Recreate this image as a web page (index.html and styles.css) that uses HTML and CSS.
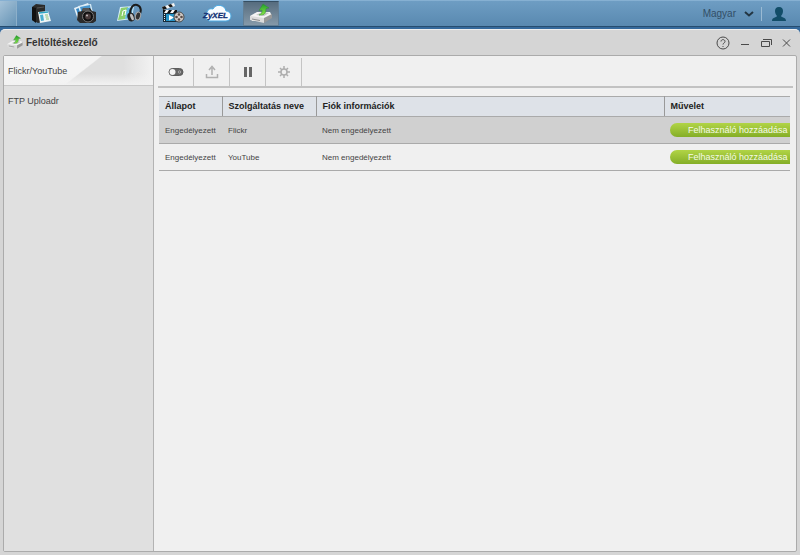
FILE: index.html
```html
<!DOCTYPE html>
<html lang="hu">
<head>
    <meta charset="UTF-8">
    <meta name="viewport" content="width=device-width, initial-scale=1.0">
    <title>Feltöltéskezelő</title>
    <link rel="stylesheet" href="styles.css">
</head>
<body>
    <svg class="defs" aria-hidden="true">
        <linearGradient id="arrow" x1="0" y1="0" x2="0" y2="1">
            <stop offset="0" stop-color="#1f9f2a"/>
            <stop offset="1" stop-color="#8be548"/>
        </linearGradient>
        <symbol id="uploader" viewBox="0 0 26 22">
            <path d="M2 13 9 9h13l2 4-8 5H4z" fill="#f4f4f4"/>
            <path d="M2 13 16 15v5L2 17z" fill="#dcdcdc"/>
            <path d="M16 15 24 11v4l-8 5z" fill="#989898"/>
            <path d="M4 16l8 1.500" stroke="#8d8d8d"/>
            <path d="M8 12l6-3 7 1-5 3z" fill="#c4c4c4"/>
            <path d="M11 12c3-1 3-3 3-5l-3 .500L15 1l6 4-3 .500c0 4-1 6-4 6.500z" fill="url(#arrow)" stroke="#2b9131" stroke-width=".5"/>
        </symbol>
    </svg>

    <header class="taskbar">
        <button class="show-desktop" aria-label="Asztal"></button>
        <nav class="apps">
            <button class="app" aria-label="Fájlkezelő">
                <svg width="22" height="20" viewBox="0 0 22 20">
                    <path d="M2 3l4-3 9 1v16l-7 2-6-3z" fill="#2a2a2a"/>
                    <path d="M2 3l4 1v15l-4-3z" fill="#111"/>
                    <path d="M7 4l7-1" stroke="#555"/>
                    <path d="M8 8l10-1 3 10-11 2z" fill="#eef5f5"/>
                    <path d="M9 9l9-1" stroke="#2ba3c4" stroke-width="1.500"/>
                    <path d="M10 11l3-.500 1 6-3 .500z" fill="#49afd1"/>
                    <path d="M15 11h3M15.500 13h3M16 15h3" stroke="#8cc178"/>
                </svg>
            </button>
            <button class="app" aria-label="Fényképek">
                <svg width="24" height="21" viewBox="0 0 24 21">
                    <path d="M1 5l14-5 5 10-15 7z" fill="#e8f2f8"/>
                    <path d="M3 6l11-4 4 8-12 5z" fill="#3989c4"/>
                    <path d="M5 3l13-2 2 9-12 3z" fill="#d9ecf6"/>
                    <path d="M7 4l10-2 1 7-9 2z" fill="#4996cd"/>
                    <path d="M5 9l4-1 1-3h7l2 3 4 1v9l-3 2H7l-3-3z" fill="#2b2b2b"/>
                    <path d="M10 5h6l1 3H9z" fill="#555"/>
                    <circle cx="15" cy="13.500" r="5.500" fill="#111" stroke="#777"/>
                    <circle cx="15" cy="13.500" r="3" fill="#4a3c3c"/>
                    <circle cx="14" cy="12.500" r="1" fill="#c4bdbd"/>
                </svg>
            </button>
            <button class="app" aria-label="Zene">
                <svg width="26" height="21" viewBox="0 0 26 21">
                    <path d="M4 4l14-1-2 13-15 2z" fill="#d7eefa"/>
                    <path d="M5 5l7-1-3 12-7 1z" fill="#8ccf6c"/>
                    <path d="M11 5l6-1-2 11-6 1z" fill="#62b8e2"/>
                    <path d="M6 13l1-5 3-1-1 5" fill="none" stroke="#fff"/>
                    <path d="M14 11c0-6 3-10 7-9 4 1 5 6 2 11" fill="none" stroke="#1b1b1b" stroke-width="2"/>
                    <ellipse cx="15" cy="14" rx="3.500" ry="4.500" transform="rotate(-20 15 14)" fill="#222"/>
                    <ellipse cx="16" cy="14" rx="1.500" ry="3.500" transform="rotate(-20 16 14)" fill="#c1c1c1"/>
                    <ellipse cx="22" cy="13" rx="2.500" ry="4" transform="rotate(15 22 13)" fill="#333" stroke="#aaa"/>
                </svg>
            </button>
            <button class="app" aria-label="Videók">
                <svg width="24" height="21" viewBox="0 0 24 21">
                    <path d="M1 4l12-4 1 3-12 4z" fill="#f5f5f5"/>
                    <path d="M1 4l3-1 2 2.500-4 1.500zM7 2l3-1 2 2.500-3 1z" fill="#161616"/>
                    <path d="M2 7h14v3H2z" fill="#f8f8f8"/>
                    <path d="M2 7h3l-2 3H2zM8 7h3l-2 3H6zM14 7h2v3h-4z" fill="#111"/>
                    <path d="M2 10h15v9H2z" fill="#162c3a"/>
                    <path d="M5 11h9v7H5z" fill="#2693c6"/>
                    <path d="M8 12l5 2.500-5 3z" fill="#fff"/>
                    <path d="M3.500 11v7" stroke="#eee" stroke-dasharray="1 1"/>
                    <circle cx="18" cy="14" r="5" fill="#d3cdc9" stroke="#4a4a4a"/>
                    <g fill="#594b46"><circle cx="18" cy="11.500" r="1.300"/><circle cx="18" cy="16.500" r="1.300"/><circle cx="15.500" cy="14" r="1.300"/><circle cx="20.500" cy="14" r="1.300"/></g>
                </svg>
            </button>
            <button class="app" aria-label="ZyXEL">
                <svg width="30" height="18" viewBox="0 0 30 18">
                    <path d="M6 15a4.500 4.500 0 0 1-1-8 5 5 0 0 1 6-3 7 7 0 0 1 13 2 5 5 0 0 1 0 10H7z" fill="#f8fcff" stroke="#4aa9e2"/>
                    <text x="1" y="13" class="brand">ZyXEL</text>
                </svg>
            </button>
            <button class="app active" aria-label="Feltöltéskezelő">
                <svg width="26" height="22"><use href="#uploader"/></svg>
            </button>
        </nav>
        <div class="session">
            <button class="language">Magyar
                <svg width="10" height="6" viewBox="0 0 10 6"><path d="M1 1l4 3.500 4-3.500" fill="none" stroke="#233643" stroke-width="2"/></svg>
            </button>
            <button class="user" aria-label="Felhasználó">
                <svg width="16" height="16" viewBox="0 0 16 16"><path d="M8 1c3 0 4 2 4 4s-1 4-2 5c1 2 5 1 5 5H1c0-4 4-3 5-5-1-1-2-3-2-5s1-4 4-4z" fill="#124d68"/></svg>
            </button>
        </div>
    </header>

    <main class="window">
        <div class="titlebar">
            <svg width="18" height="17"><use href="#uploader"/></svg>
            <h1>Feltöltéskezelő</h1>
            <div class="controls">
                <button aria-label="Súgó"><svg width="14" height="14" viewBox="0 0 14 14"><circle cx="7" cy="7" r="6"/><path d="M5 5.500C5 3 9 3 9 5.500 9 7 7 7 7 8.500M7 10v1"/></svg></button>
                <button aria-label="Kis méret"><svg width="10" height="14" viewBox="0 0 10 14"><path d="M1 8.500h8"/></svg></button>
                <button aria-label="Előző méret"><svg width="12" height="14" viewBox="0 0 12 14"><path d="M1.500 5.500h8v5h-8zM3 3.500h8.500V9"/></svg></button>
                <button aria-label="Bezárás"><svg width="9" height="14" viewBox="0 0 9 14"><path d="M1 3.500l7 7M8 3.500l-7 7"/></svg></button>
            </div>
        </div>
        <div class="content">
            <nav class="sidebar">
                <a class="selected" href="#flickr">Flickr/YouTube</a>
                <a href="#ftp">FTP Uploadr</a>
            </nav>
            <section class="panel">
                <div class="toolbar">
                    <button aria-label="Be/Ki"><svg width="16" height="16" viewBox="0 0 16 16"><rect x="1" y="4.500" width="14" height="7" rx="3.500" fill="#666" stroke="#5c5c5c"/><circle cx="4.500" cy="8" r="3" fill="#f4f4f4"/><circle cx="11.500" cy="8" r="1.200" fill="none" stroke="#aaa"/></svg></button>
                    <button aria-label="Feltöltés"><svg width="14" height="16" viewBox="0 0 14 16"><path d="M7 11V4M4 6l3-3.500L10 6M1.500 10v3.500h11V10" fill="none" stroke="#b0b0b0" stroke-width="1.500"/></svg></button>
                    <button aria-label="Szünet"><svg width="10" height="16" viewBox="0 0 10 16"><path d="M1 3h3v10H1zM6 3h3v10H6z" fill="#666"/></svg></button>
                    <button aria-label="Beállítások"><svg width="14" height="16" viewBox="0 0 14 16"><g fill="none" stroke="#adadad"><circle cx="7" cy="8" r="3" stroke-width="1.500"/><path d="M7 2v3M7 11v3M1 8h3M10 8h3M3 4l2 2M9 10l2 2M3 12l2-2M9 6l2-2" stroke-width="1.500"/></g></svg></button>
                </div>
                <div class="table-wrap">
                    <table>
                        <colgroup><col class="col-state"><col class="col-name"><col><col class="col-action"></colgroup>
                        <thead>
                            <tr><th>Állapot</th><th>Szolgáltatás neve</th><th>Fiók információk</th><th>Művelet</th></tr>
                        </thead>
                        <tbody>
                            <tr class="current"><td>Engedélyezett</td><td>Flickr</td><td>Nem engedélyezett</td><td><button class="add-user">Felhasználó hozzáadása</button></td></tr>
                            <tr><td>Engedélyezett</td><td>YouTube</td><td>Nem engedélyezett</td><td><button class="add-user">Felhasználó hozzáadása</button></td></tr>
                        </tbody>
                    </table>
                </div>
            </section>
        </div>
    </main>
</body>
</html>
```
FILE: styles.css
```css
* {
    box-sizing: border-box;
}
body {
    display: flex;
    flex-direction: column;
    min-height: 100vh;
    margin: 0;
    font-family: "Liberation Sans", Arial, sans-serif;
    background-color: #35699b;
    color: #444;
}
button {
    padding: 0;
    border: 0;
    background: none;
    font-family: inherit;
    color: inherit;
    cursor: pointer;
}
svg {
    display: block;
    flex: none;
}
.defs {
    position: absolute;
    width: 0;
    height: 0;
}

/* Taskbar */
.taskbar {
    display: flex;
    height: 27px;
    border-top: 1px solid #86b0d2;
    border-bottom: 1px solid #264d70;
    background: linear-gradient(#6e9dc3, #5989b0);
}
.show-desktop {
    width: 17px;
    border-right: 1px solid #8db0ca;
    background: linear-gradient(135deg, #a5c2d8, #6593b5);
}
.apps {
    display: flex;
    gap: 8px;
    padding-left: 6px;
}
.app {
    display: flex;
    align-items: center;
    justify-content: center;
    width: 36px;
}
.app.active {
    background: linear-gradient(#566c7e, #8599a9);
    border: 1px solid #647f94;
    border-top-color: #354f63;
}
.brand {
    font-size: 8px;
    font-weight: bold;
    font-style: italic;
    fill: #102f73;
    stroke: #102f73;
    stroke-width: 0.3;
}
.session {
    display: flex;
    align-items: center;
    margin-left: auto;
    padding-right: 13px;
}
.language {
    display: flex;
    align-items: center;
    gap: 8px;
    padding-right: 7px;
    font-size: 10px;
    line-height: 14px;
    color: #324e66;
    border-right: 1px solid #9abad3;
}
.user {
    padding-left: 9px;
}

/* Window */
.window {
    flex: 1;
    display: flex;
    flex-direction: column;
    margin-top: 2px;
    padding: 0 3px 3px;
    background-color: #d5d5d5;
    border-top: 1px solid #eee;
    border-radius: 5px 5px 0 0;
}
.titlebar {
    display: flex;
    align-items: center;
    height: 25px;
    padding: 0 6px 0 3px;
}
h1 {
    margin: 0 0 0 2px;
    font-size: 10px;
    color: #333;
}
.controls {
    display: flex;
    gap: 10px;
    margin-left: auto;
}
.controls svg {
    fill: none;
    stroke: #4a4a4a;
    stroke-width: 1;
}
.content {
    flex: 1;
    display: flex;
    border: 1px solid #ababab;
    border-radius: 2px;
    background-color: #f0f0f0;
}
.sidebar {
    width: 150px;
    background-color: #e0e0e0;
    border-right: 1px solid #b3b3b3;
}
.sidebar a {
    display: block;
    height: 30px;
    padding: 0 4px;
    font-size: 9px;
    line-height: 30px;
    color: #444;
    text-decoration: none;
}
.sidebar .selected {
    border-bottom: 1px solid #c8c8c8;
    background:
        linear-gradient(transparent 60%, #f2f2f2),
        linear-gradient(to right, transparent 80%, #f2f2f2),
        linear-gradient(142deg, #f4f4f4 52%, #dfdfdf 53%);
}
.panel {
    flex: 1;
    min-width: 0;
    padding: 2px 6px 0 4px;
}
.toolbar {
    display: flex;
    height: 30px;
    margin-right: -3px;
    border-bottom: 2px solid #c2c2c2;
}
.toolbar button {
    display: flex;
    align-items: center;
    justify-content: center;
    width: 36px;
    border-right: 1px solid #c4c4c4;
}
.table-wrap {
    margin: 8px 0 0 1px;
    overflow: hidden;
}
table {
    width: 100%;
    table-layout: fixed;
    border-collapse: collapse;
}
.col-state {
    width: 63px;
}
.col-name {
    width: 94px;
}
.col-action {
    width: 126px;
}
th, td {
    padding: 0 6px;
    text-align: left;
    white-space: nowrap;
    border-bottom: 1px solid #aaa;
}
th {
    height: 20px;
    padding-bottom: 2px;
    font-size: 9px;
    color: #222;
    background-color: #dee2e8;
    border-top: 1px solid #aaa;
    border-right: 1px solid #999;
}
th:last-child {
    border-right: 0;
}
td {
    height: 27px;
    font-size: 8px;
    overflow: hidden;
}
.current td {
    background-color: #d0d0d0;
}
.add-user {
    display: block;
    padding: 0 18px;
    font-size: 9px;
    line-height: 14px;
    color: #f5fae8;
    background: linear-gradient(#b1d446, #84ae27);
    border-radius: 7px;
}
```
